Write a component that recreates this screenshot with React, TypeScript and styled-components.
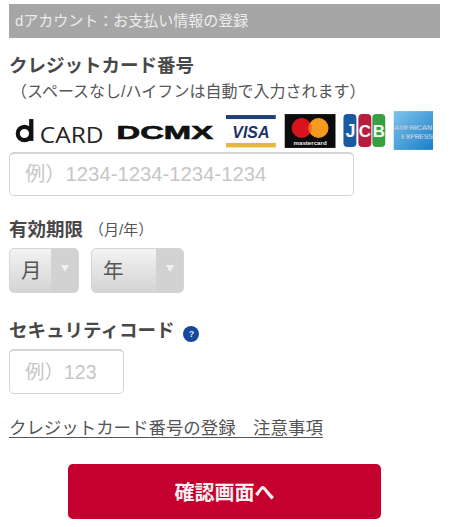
import React from 'react';
import styled, { createGlobalStyle } from 'styled-components';

const GlobalStyle = createGlobalStyle`
  html, body {
    margin: 0;
    padding: 0;
    background: #fff;
    font-family: "Liberation Sans", "Noto Sans CJK JP", sans-serif;
  }
`;

const Page = styled.div`
  width: 452px;
  height: 527px;
  box-sizing: border-box;
  padding: 4px 12px 0 9px;
  overflow: hidden;
`;

const Header = styled.h1`
  margin: 0;
  height: 34px;
  padding-left: 6px;
  background: #a6a6a6;
  color: #ececec;
  font-size: 15px;
  font-weight: 400;
  line-height: 34px;
`;

const Label = styled.h2`
  margin: 0;
  display: flex;
  align-items: center;
  color: #484848;
  font-size: 18.5px;
  font-weight: 700;
  line-height: 24px;
`;

const CardLabel = styled(Label)`
  margin-top: 16px;
`;

const Note = styled.p`
  margin: 3px 0 0 2px;
  color: #555;
  font-size: 16px;
  line-height: 22px;
`;

const LabelNote = styled.span`
  margin-left: 6px;
  color: #555;
  font-size: 15px;
  font-weight: 400;
`;

const Brands = styled.div`
  display: flex;
  align-items: center;
  height: 42px;
  margin-top: 7px;
  padding-left: 5px;
`;

const TextField = styled.input<{ $width: number; $size: number }>`
  display: block;
  box-sizing: border-box;
  width: ${(p) => p.$width}px;
  height: 44px;
  padding: 0 0 0 15px;
  border: 1px solid #d4d4d4;
  border-top-width: 2px;
  border-radius: 5px;
  background: #fff;
  font-family: inherit;
  font-size: ${(p) => p.$size}px;
  outline: none;

  &::placeholder {
    color: #c6c6c6;
    opacity: 1;
  }
`;

const ExpiryLabel = styled(Label)`
  margin-top: 22px;
`;

const Selects = styled.div`
  display: flex;
  gap: 12px;
  margin-top: 6px;
`;

const SelectBox = styled.div<{ $width: number }>`
  display: flex;
  box-sizing: border-box;
  width: ${(p) => p.$width}px;
  height: 45px;
  border: 1px solid #d5d5d5;
  border-radius: 5px;
  overflow: hidden;
  background: linear-gradient(#f3f3f3, #d4d4d4);
`;

const SelectValue = styled.span`
  flex: 1;
  padding-left: 11px;
  color: #555;
  font-size: 20.5px;
  line-height: 43px;
`;

const SelectArrow = styled.span`
  display: flex;
  justify-content: center;
  width: 27px;
  padding-top: 16px;
  box-sizing: border-box;
  background: #d2d2d2;

  &::after {
    content: '';
    width: 0;
    height: 0;
    border-left: 4px solid transparent;
    border-right: 4px solid transparent;
    border-top: 7px solid #f0f0f0;
  }
`;

const SecurityLabel = styled(Label)`
  margin-top: 26px;
`;

const HelpIcon = styled.span`
  width: 16px;
  height: 16px;
  margin: 6px 0 0 9px;
  border-radius: 50%;
  background: #17489a;
  color: #dfe6f2;
  font-size: 9px;
  font-weight: 700;
  line-height: 16px;
  text-align: center;
`;

const SecurityField = styled(TextField)`
  height: 45px;
  margin-top: 6px;
`;

const NoticeLink = styled.a`
  display: block;
  width: max-content;
  margin-top: 22px;
  color: #555;
  font-size: 17.45px;
  line-height: 24px;
  text-decoration: underline;
  text-underline-offset: 3px;
`;

const SubmitRow = styled.div`
  display: flex;
  margin-top: 24px;
  padding-left: 59px;
`;

const SubmitButton = styled.button`
  width: 313px;
  height: 55px;
  border: 0;
  border-radius: 5px;
  background: #c4002f;
  color: #f8f0f0;
  font-family: inherit;
  font-size: 20px;
  font-weight: 700;
`;

const BrandLogos = () => (
  <svg width="428" height="42" viewBox="0 0 428 42">
    {/* d CARD */}
    <circle cx="10.5" cy="23.5" r="6.7" fill="none" stroke="#111" strokeWidth="4.2" />
    <rect x="15.2" y="9" width="4.3" height="22" fill="#111" />
    <text x="26" y="33" fontFamily="'Open Sans', sans-serif" fontSize="22" textLength="64" lengthAdjust="spacingAndGlyphs" fill="#222">CARD</text>
    {/* DCMX */}
    <text x="103" y="29" fontFamily="'Liberation Sans', sans-serif" fontSize="18" fontWeight="700" textLength="97" lengthAdjust="spacingAndGlyphs" stroke="#111" strokeWidth="0.6" fill="#111">DCMX</text>
    {/* VISA */}
    <rect x="213" y="5" width="50" height="4" fill="#1c3f7a" />
    <rect x="213" y="33" width="50" height="4.5" fill="#e8b83c" />
    <text x="238" y="28" textAnchor="middle" fontFamily="'Liberation Sans', sans-serif" fontSize="16" fontStyle="italic" fontWeight="700" fill="#1c3566">VISA</text>
    {/* Mastercard */}
    <rect x="272" y="4" width="51" height="34" fill="#0c0c0c" />
    <circle cx="289" cy="18" r="10" fill="#d8141e" />
    <circle cx="306" cy="18" r="10" fill="#f49a1e" />
    <path d="M297.5 12.5a10 10 0 0 1 0 11a10 10 0 0 1 0-11z" fill="#ee6a1b" />
    <text x="297.5" y="35.5" textAnchor="middle" fontFamily="'Liberation Sans', sans-serif" fontSize="6.2" fontWeight="700" fill="#eee">mastercard</text>
    {/* JCB */}
    <rect x="331" y="4" width="13" height="33" rx="4" fill="#1b5a9e" />
    <rect x="346" y="4" width="13" height="33" rx="4" fill="#b81c3e" />
    <rect x="360" y="4" width="13" height="33" rx="4" fill="#37a043" />
    <text x="338" y="27" textAnchor="middle" fontFamily="'Liberation Sans', sans-serif" fontSize="18" fontWeight="700" fill="#f4f4f4">J</text>
    <text x="352.5" y="27" textAnchor="middle" fontFamily="'Liberation Sans', sans-serif" fontSize="17" fontWeight="700" fill="#f4f4f4">C</text>
    <text x="366.5" y="27" textAnchor="middle" fontFamily="'Liberation Sans', sans-serif" fontSize="17" fontWeight="700" fill="#f4f4f4">B</text>
    {/* American Express */}
    <defs>
      <linearGradient id="amex" x1="0" y1="0" x2="1" y2="1">
        <stop offset="0" stopColor="#7fc4ec" />
        <stop offset="1" stopColor="#1a7fc8" />
      </linearGradient>
    </defs>
    <rect x="381.5" y="1" width="39.5" height="39" fill="url(#amex)" />
    <text x="401" y="20" textAnchor="middle" fontFamily="'Liberation Sans', sans-serif" fontSize="7.5" fontWeight="700" textLength="38" lengthAdjust="spacingAndGlyphs" fill="#eef6fc" stroke="#3f86bf" strokeWidth="0.3">AMERICAN</text>
    <text x="405" y="29" textAnchor="middle" fontFamily="'Liberation Sans', sans-serif" fontSize="7.5" fontWeight="700" textLength="32" lengthAdjust="spacingAndGlyphs" fill="#eef6fc" stroke="#3f86bf" strokeWidth="0.3">EXPRESS</text>
  </svg>
);

export default function App() {
  return (
    <Page>
      <GlobalStyle />
      <Header>dアカウント：お支払い情報の登録</Header>
      <CardLabel>クレジットカード番号</CardLabel>
      <Note>（スペースなし/ハイフンは自動で入力されます）</Note>
      <Brands>
        <BrandLogos />
      </Brands>
      <TextField $width={345} $size={20.3} placeholder="例）1234-1234-1234-1234" readOnly />
      <ExpiryLabel>
        有効期限<LabelNote>（月/年）</LabelNote>
      </ExpiryLabel>
      <Selects>
        <SelectBox $width={70}>
          <SelectValue>月</SelectValue>
          <SelectArrow />
        </SelectBox>
        <SelectBox $width={93}>
          <SelectValue>年</SelectValue>
          <SelectArrow />
        </SelectBox>
      </Selects>
      <SecurityLabel>
        セキュリティコード<HelpIcon>?</HelpIcon>
      </SecurityLabel>
      <SecurityField $width={115} $size={19.5} placeholder="例）123" readOnly />
      <NoticeLink>クレジットカード番号の登録　注意事項</NoticeLink>
      <SubmitRow>
        <SubmitButton>確認画面へ</SubmitButton>
      </SubmitRow>
    </Page>
  );
}
